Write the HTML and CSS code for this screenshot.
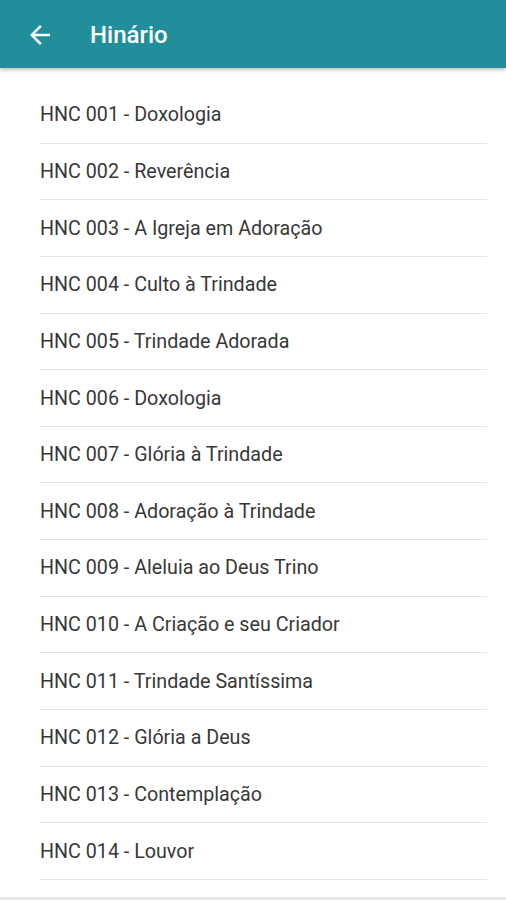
FILE: index.html
```html
<!DOCTYPE html>
<html lang="pt">
<head>
    <meta charset="UTF-8">
    <meta name="viewport" content="width=device-width, initial-scale=1.0">
    <title>Hinário</title>
    <link rel="stylesheet" href="styles.css">
</head>
<body>
    <div class="app">
        <header class="toolbar">
            <button class="back-btn" aria-label="Voltar">
                <svg width="30" height="30" viewBox="0 0 24 24">
                    <path d="M20 11H7.83l5.59-5.59L12 4l-8 8 8 8 1.41-1.41L7.83 13H20v-2z" fill="#fff"/>
                </svg>
            </button>
            <h1 class="title">Hinário</h1>
        </header>

        <ul class="hymn-list">
            <li class="hymn-item">HNC 001 - Doxologia</li>
            <li class="hymn-item">HNC 002 - Reverência</li>
            <li class="hymn-item">HNC 003 - A Igreja em Adoração</li>
            <li class="hymn-item">HNC 004 - Culto à Trindade</li>
            <li class="hymn-item">HNC 005 - Trindade Adorada</li>
            <li class="hymn-item">HNC 006 - Doxologia</li>
            <li class="hymn-item">HNC 007 - Glória à Trindade</li>
            <li class="hymn-item">HNC 008 - Adoração à Trindade</li>
            <li class="hymn-item">HNC 009 - Aleluia ao Deus Trino</li>
            <li class="hymn-item">HNC 010 - A Criação e seu Criador</li>
            <li class="hymn-item">HNC 011 - Trindade Santíssima</li>
            <li class="hymn-item">HNC 012 - Glória a Deus</li>
            <li class="hymn-item">HNC 013 - Contemplação</li>
            <li class="hymn-item">HNC 014 - Louvor</li>
        </ul>

        <div class="bottom-edge"></div>
    </div>
</body>
</html>
```

FILE: styles.css
```css
html, body {
    margin: 0;
    padding: 0;
}

body {
    font-family: Roboto, "Noto Sans", sans-serif;
    background-color: #fff;
}

.app {
    display: flex;
    flex-direction: column;
    height: 100vh;
    overflow: hidden;
}

.toolbar {
    display: flex;
    align-items: center;
    height: 68px;
    flex-shrink: 0;
    padding: 0 0 0 25px;
    background-color: #218f9b;
    box-shadow: 0 2px 4px rgba(0, 0, 0, 0.25);
    position: relative;
    z-index: 1;
}

.back-btn {
    display: flex;
    align-items: center;
    justify-content: center;
    width: 30px;
    height: 30px;
    margin-top: 2px;
    padding: 0;
    border: none;
    background: none;
    cursor: pointer;
}

.title {
    margin: 2px 0 0 35px;
    color: #fff;
    font-size: 24px;
    font-weight: 500;
}

.hymn-list {
    flex: 1;
    list-style: none;
    margin: 19px 0 0 0;
    padding: 0 19px 0 40px;
}

.hymn-item {
    display: flex;
    align-items: center;
    height: 55.65px;
    border-bottom: 1px solid #e3e3e3;
    color: #383838;
    font-size: 19.7px;
}

.bottom-edge {
    height: 3px;
    flex-shrink: 0;
    background-color: #e6e6e6;
}
```
